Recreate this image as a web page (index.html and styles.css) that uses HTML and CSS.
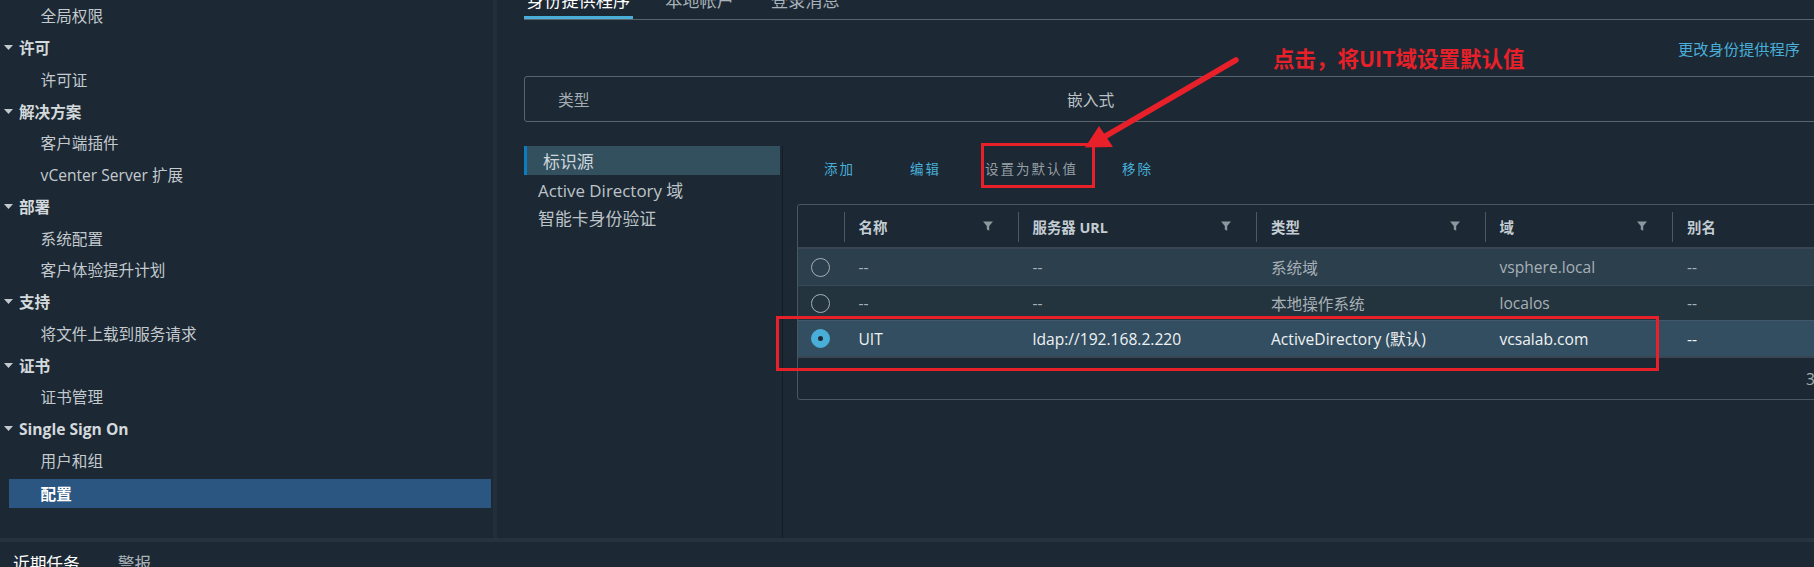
FILE: index.html
```html
<!DOCTYPE html>
<html lang="zh-CN">
<head>
<meta charset="utf-8">
<title>配置 - Single Sign On</title>
<link rel="stylesheet" href="styles.css">
</head>
<body>
<div class="app">
  <div class="top">
    <nav class="sidebar">
      <div class="sb-item sub">全局权限</div>
      <div class="sb-item head"><svg class="caret" viewBox="0 0 9 5"><path d="M0 0H9L4.5 5Z"/></svg>许可</div>
      <div class="sb-item sub">许可证</div>
      <div class="sb-item head"><svg class="caret" viewBox="0 0 9 5"><path d="M0 0H9L4.5 5Z"/></svg>解决方案</div>
      <div class="sb-item sub">客户端插件</div>
      <div class="sb-item sub">vCenter Server 扩展</div>
      <div class="sb-item head"><svg class="caret" viewBox="0 0 9 5"><path d="M0 0H9L4.5 5Z"/></svg>部署</div>
      <div class="sb-item sub">系统配置</div>
      <div class="sb-item sub">客户体验提升计划</div>
      <div class="sb-item head"><svg class="caret" viewBox="0 0 9 5"><path d="M0 0H9L4.5 5Z"/></svg>支持</div>
      <div class="sb-item sub">将文件上载到服务请求</div>
      <div class="sb-item head"><svg class="caret" viewBox="0 0 9 5"><path d="M0 0H9L4.5 5Z"/></svg>证书</div>
      <div class="sb-item sub">证书管理</div>
      <div class="sb-item head"><svg class="caret" viewBox="0 0 9 5"><path d="M0 0H9L4.5 5Z"/></svg>Single Sign On</div>
      <div class="sb-item sub">用户和组</div>
      <div class="sb-item sub selected">配置</div>
    </nav>
    <main class="main">
      <div class="content">
        <div class="tabs">
          <div class="tab active">身份提供程序</div>
          <div class="tab">本地帐户</div>
          <div class="tab">登录消息</div>
        </div>
        <div class="link-row"><span class="link">更改身份提供程序</span></div>
        <div class="type-box">
          <span class="type-label">类型</span>
          <span class="type-value">嵌入式</span>
        </div>
        <div class="lower">
          <div class="cfg-nav">
            <div class="cfg-item active">标识源</div>
            <div class="cfg-item">Active Directory 域</div>
            <div class="cfg-item">智能卡身份验证</div>
          </div>
          <div class="panel">
            <div class="actions">
              <span class="btn">添加</span>
              <span class="btn">编辑</span>
              <span class="btn disabled">设置为默认值</span>
              <span class="btn">移除</span>
            </div>
            <div class="table">
              <div class="thead">
                <div class="th"></div>
                <div class="th">名称<svg class="filter" viewBox="0 0 10 10"><path d="M0 0.5H10L6.2 5V9.8L3.8 8.6V5Z"/></svg></div>
                <div class="th">服务器 URL<svg class="filter" viewBox="0 0 10 10"><path d="M0 0.5H10L6.2 5V9.8L3.8 8.6V5Z"/></svg></div>
                <div class="th">类型<svg class="filter" viewBox="0 0 10 10"><path d="M0 0.5H10L6.2 5V9.8L3.8 8.6V5Z"/></svg></div>
                <div class="th">域<svg class="filter" viewBox="0 0 10 10"><path d="M0 0.5H10L6.2 5V9.8L3.8 8.6V5Z"/></svg></div>
                <div class="th">别名<svg class="filter" viewBox="0 0 10 10"><path d="M0 0.5H10L6.2 5V9.8L3.8 8.6V5Z"/></svg></div>
              </div>
              <div class="tr r1">
                <div class="td"><span class="radio"></span></div>
                <div class="td">--</div>
                <div class="td">--</div>
                <div class="td">系统域</div>
                <div class="td">vsphere.local</div>
                <div class="td">--</div>
              </div>
              <div class="tr r2">
                <div class="td"><span class="radio"></span></div>
                <div class="td">--</div>
                <div class="td">--</div>
                <div class="td">本地操作系统</div>
                <div class="td">localos</div>
                <div class="td">--</div>
              </div>
              <div class="tr r3">
                <div class="td"><span class="radio on"><span class="dot"></span></span></div>
                <div class="td">UIT</div>
                <div class="td">ldap://192.168.2.220</div>
                <div class="td">ActiveDirectory (默认)</div>
                <div class="td">vcsalab.com</div>
                <div class="td">--</div>
              </div>
              <div class="tfoot">3 项</div>
            </div>
          </div>
        </div>
      </div>
    </main>
  </div>
  <div class="splitter"></div>
  <div class="bottom">
    <span class="btab active">近期任务</span>
    <span class="btab">警报</span>
  </div>

  <div class="note">点击，将UIT域设置默认值</div>
  <div class="redbox box-btn"></div>
  <div class="redbox box-row"></div>
  <svg class="arrow" viewBox="0 0 1814 567" width="1814" height="567">
    <line x1="1236" y1="60" x2="1104" y2="137" stroke="#e8202a" stroke-width="5.5" stroke-linecap="round"/>
    <polygon points="1085,147.5 1099,126 1113,147" fill="#e8202a"/>
  </svg>
</div>
</body>
</html>
```

FILE: styles.css
```css
html, body {
  margin: 0;
  padding: 0;
}

body {
  background: #1c2833;
  font-family: "Open Sans", "Noto Sans CJK SC", sans-serif;
  width: 1814px;
  height: 567px;
  overflow: hidden;
}

.app {
  position: relative;
  width: 1814px;
  height: 567px;
  display: flex;
  flex-direction: column;
  overflow: hidden;
}

.top {
  display: flex;
  height: 538px;
  flex-shrink: 0;
}

/* ---------- sidebar ---------- */
.sidebar {
  width: 493px;
  flex-shrink: 0;
  border-right: 4px solid #222f3a;
}

.sb-item {
  height: 31.75px;
  display: flex;
  align-items: center;
  font-size: 15.6px;
  color: #c3cacf;
  white-space: nowrap;
}

.sb-item.sub {
  padding-left: 40.6px;
}

.sb-item.head {
  padding-left: 4px;
  font-weight: 700;
  color: #d3d9dc;
}

.caret {
  width: 9px;
  height: 5px;
  margin-right: 6px;
  fill: #c3cacf;
}

.sb-item.selected {
  background: #2c5682;
  margin: 3px 2px 0 9px;
  height: 29px;
  padding-left: 31.6px;
  color: #ffffff;
  font-weight: 700;
}

/* ---------- main ---------- */
.main {
  flex: 1;
  min-width: 0;
  overflow: hidden;
  padding-left: 27px;
}

.content {
  width: 1320px;
}

.tabs {
  display: flex;
  height: 20px;
  box-sizing: border-box;
  border-bottom: 1px solid #59646d;
}

.tab {
  height: 19px;
  box-sizing: border-box;
  padding: 0 3px;
  margin-right: 31px;
  font-size: 17.2px;
  line-height: 2px;
  color: #a8b3b9;
  white-space: nowrap;
}

.tab:first-child {
  margin-right: 29px;
}

.tab.active {
  color: #ffffff;
  border-bottom: 3px solid #49afd9;
}

.link-row {
  height: 56px;
  display: flex;
  align-items: center;
  justify-content: flex-end;
  padding-right: 44px;
}

.link {
  font-size: 15.25px;
  color: #49afd9;
}

.type-box {
  height: 46px;
  box-sizing: border-box;
  border: 1px solid #59646d;
  border-radius: 3px;
  display: flex;
  align-items: center;
  font-size: 15.8px;
}

.type-label {
  width: 509px;
  padding-left: 33px;
  color: #a3adb3;
}

.type-value {
  color: #b9c1c6;
}

.lower {
  display: flex;
  margin-top: 24px;
  height: 392px;
}

.cfg-nav {
  width: 258px;
  flex-shrink: 0;
  border-right: 1px solid #131c23;
}

.cfg-item {
  height: 28.5px;
  display: flex;
  align-items: center;
  padding-left: 14px;
  font-size: 16.9px;
  color: #bcc4c9;
  white-space: nowrap;
}

.cfg-item.active {
  height: 29px;
  margin-right: 2px;
  background: #33505f;
  border-left: 3px solid #0c7bc0;
  padding-left: 16px;
  color: #d0d7db;
}

.panel {
  flex: 1;
  padding-left: 14px;
}

.actions {
  height: 44px;
  display: flex;
  align-items: center;
  gap: 44px;
  padding-left: 27px;
  font-size: 13.5px;
  letter-spacing: 2px;
}

.btn {
  color: #49afd9;
  white-space: nowrap;
}

.btn:first-child {
  margin-right: 11px;
}

.btn.disabled {
  color: #959fa5;
}

/* ---------- table ---------- */
.table {
  margin-top: 14px;
  width: 1100px;
  border: 1px solid #4a5660;
  border-radius: 3px;
}

.thead,
.tr {
  display: grid;
  grid-template-columns: 45.5px 174px 238.5px 228.5px 187.5px 225px;
}

.thead {
  height: 44px;
  box-sizing: border-box;
  border-bottom: 2px solid #3a4752;
}

.th {
  position: relative;
  display: flex;
  align-items: center;
  padding-left: 15px;
  font-size: 14.4px;
  font-weight: 700;
  color: #c3cdd3;
  white-space: nowrap;
}

.th + .th::before {
  content: "";
  position: absolute;
  left: 0;
  top: 7px;
  width: 1px;
  height: 30px;
  background: #4d5861;
}

.filter {
  width: 10px;
  height: 10px;
  margin-left: auto;
  margin-right: 25px;
  fill: #8d979d;
}

.tr {
  height: 36px;
  box-sizing: border-box;
  align-items: center;
  font-size: 15.6px;
  color: #a7b0b6;
}

.td {
  padding-left: 15px;
  white-space: nowrap;
  display: flex;
  align-items: center;
}

.td:first-child {
  padding-left: 13px;
}

.tr.r1 {
  background: #2b3f4d;
}

.tr.r2 {
  height: 35px;
  background: #24343f;
  border-top: 1px solid #3a4955;
}

.tr.r3 {
  background: #334e60;
  border-top: 1px solid #42586a;
  color: #eef2f4;
}

.radio {
  width: 19px;
  height: 19px;
  box-sizing: border-box;
  border-radius: 50%;
  border: 1.5px solid #a6afb5;
  display: flex;
  align-items: center;
  justify-content: center;
}

.radio.on {
  background: #49afd9;
  border-color: #49afd9;
}

.dot {
  width: 5px;
  height: 5px;
  border-radius: 50%;
  background: #1d2a33;
}

.tfoot {
  height: 43px;
  box-sizing: border-box;
  border-top: 2px solid #3a4752;
  display: flex;
  align-items: center;
  padding-left: 1008px;
  font-size: 15.6px;
  color: #a7b0b6;
}

/* ---------- bottom ---------- */
.splitter {
  height: 4px;
  background: #25333e;
  flex-shrink: 0;
}

.bottom {
  flex: 1;
  display: flex;
  padding-left: 13px;
  padding-top: 21px;
}

.btab {
  font-size: 16.7px;
  line-height: 2px;
  color: #a9b3b9;
  margin-right: 38px;
  white-space: nowrap;
}

.btab.active {
  color: #ffffff;
}

/* ---------- annotations (overlay) ---------- */
.note {
  position: absolute;
  left: 1273px;
  top: 45px;
  font-family: "Noto Sans CJK SC", "Liberation Sans", sans-serif;
  font-size: 21.5px;
  line-height: 26px;
  font-weight: 700;
  color: #e8202a;
  white-space: nowrap;
}

.redbox {
  position: absolute;
  border: 3px solid #e8202a;
  box-sizing: border-box;
}

.box-btn {
  left: 981px;
  top: 143px;
  width: 114px;
  height: 45px;
}

.box-row {
  left: 776px;
  top: 316px;
  width: 883px;
  height: 55px;
}

.arrow {
  position: absolute;
  left: 0;
  top: 0;
  pointer-events: none;
}
```
